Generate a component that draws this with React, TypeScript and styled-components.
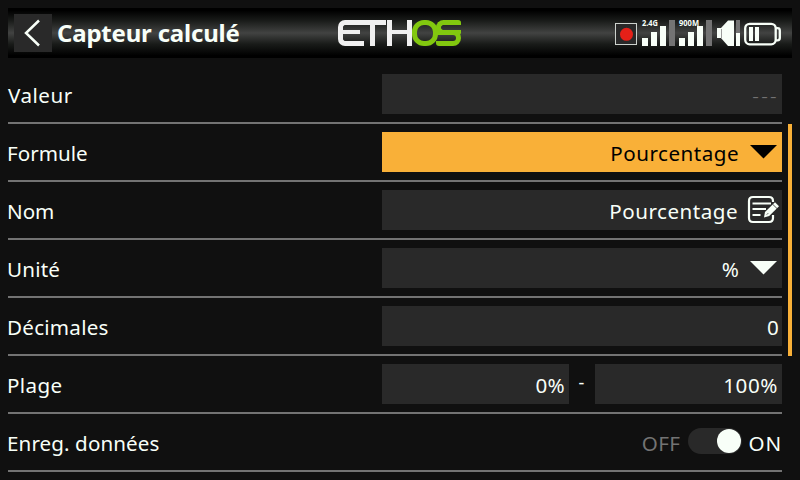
import React from "react";
import styled, { createGlobalStyle } from "styled-components";

const GlobalStyle = createGlobalStyle`
  body { margin: 0; background: #101010; overflow: hidden; }
  *, *::before, *::after { box-sizing: border-box; }
`;

const Screen = styled.div`
  width: 800px;
  height: 480px;
  padding: 8px 8px 0;
  display: flex;
  flex-direction: column;
  overflow: hidden;
  background: #101010;
  color: #f8fff8;
  font: 20.6px "Noto Sans", sans-serif;
`;

const Header = styled.header`
  height: 50px;
  flex: none;
  padding: 0 11px 0 6px;
  display: flex;
  align-items: center;
  background: linear-gradient(#000 0%, #000 5%, #191b19 25%, #424342 50%, #191b19 72%, #000 95%, #000 100%);
`;

const BackButton = styled.button`
  width: 38px;
  height: 38px;
  padding: 0;
  border: 0;
  background: #292929;
  svg { display: block; }
`;

const Title = styled.h1`
  width: 281px;
  margin: 0 0 0 5px;
  font-size: 24px;
  line-height: 50px;
  font-weight: 700;
  white-space: nowrap;
  letter-spacing: -0.2px;
`;

const Logo = styled.div`
  display: flex;
  align-items: flex-start;
  width: 124px;
  height: 26px;
`;

const LogoE = styled.span`
  width: 26px;
  height: 26px;
  border: solid #f0f0f0;
  border-width: 5px 0 5px 5px;
  border-radius: 7px 0 0 7px;
  padding-top: 5px;
  &::before { content: ""; display: block; width: 17px; height: 4px; background: #f0f0f0; }
`;

const LogoT = styled.span`
  width: 22px;
  height: 26px;
  margin-right: 1px;
  border-top: 5px solid #f0f0f0;
  padding-left: 6px;
  &::before { content: ""; display: block; width: 5px; height: 21px; background: #f0f0f0; }
`;

const LogoH = styled.span`
  width: 25px;
  height: 26px;
  border: solid #f0f0f0;
  border-width: 0 5px;
  padding-top: 10px;
  &::before { content: ""; display: block; height: 4px; background: #f0f0f0; }
`;

const LogoO = styled.span`
  width: 26px;
  height: 26px;
  border: 5px solid #82c80f;
  border-radius: 12px;
`;

const LogoS = styled.span`
  width: 25px;
  height: 26px;
  margin-left: -2px;
  &::before, &::after { content: ""; display: block; width: 25px; border: 5px solid #82c80f; }
  &::before { height: 15px; border-right: 0; border-radius: 8px 3px 3px 8px; }
  &::after { height: 16px; margin-top: -5px; border-left: 0; border-radius: 3px 8px 8px 3px; }
`;

const Status = styled.div`
  margin-left: auto;
  svg { display: block; }
`;

const Body = styled.main`
  display: flex;
  justify-content: space-between;
  padding-top: 8px;
`;

const List = styled.div`
  width: 774px;
`;

const Row = styled.div`
  height: 58px;
  padding-top: 8px;
  display: flex;
  justify-content: space-between;
  align-items: flex-start;
  border-bottom: 2px solid #737373;
`;

const Label = styled.span<{ $spacing?: number; $shift?: number }>`
  line-height: 40px;
  padding-top: 1px;
  margin-left: ${(p) => p.$shift ?? -1}px;
  white-space: nowrap;
  letter-spacing: ${(p) => p.$spacing ?? 0.2}px;
`;

const Controls = styled.div`
  width: 400px;
  height: 40px;
  display: flex;
  justify-content: flex-end;
`;

const Field = styled.div<{ $width?: number; $active?: boolean; $muted?: boolean; $right?: number }>`
  width: ${(p) => p.$width ?? 400}px;
  height: 40px;
  display: flex;
  justify-content: flex-end;
  align-items: flex-start;
  padding-right: ${(p) => p.$right ?? 4}px;
  background: ${(p) => (p.$active ? "#f9b038" : "#292929")};
  color: ${(p) => (p.$active ? "#000" : p.$muted ? "#737373" : "#f8fff8")};
  svg { display: block; flex: none; }
`;

const Value = styled.span<{ $spacing?: number; $muted?: boolean; $gap?: number }>`
  line-height: 40px;
  padding-top: 1px;
  margin-right: ${(p) => p.$gap ?? 0}px;
  letter-spacing: ${(p) => p.$spacing ?? 0.1}px;
  color: ${(p) => (p.$muted ? "#737373" : "inherit")};
`;

const Dashes = styled(Value)`
  margin-right: -1px;
  font-weight: 300;
  letter-spacing: 2.3px;
`;

const Dash = styled.span`
  width: 25px;
  margin-right: 1px;
  line-height: 36px;
  font-size: 18px;
  text-align: center;
`;

const Toggle = styled.span`
  width: 54px;
  height: 26px;
  margin: 6px 6px 0 8px;
  padding: 1px;
  display: flex;
  justify-content: flex-end;
  border-radius: 13px;
  background: #292929;
  &::after { content: ""; width: 24px; height: 24px; border-radius: 50%; background: #f8fff8; }
`;

const Scrollbar = styled.div`
  width: 4px;
  height: 232px;
  margin-top: 58px;
  background: #f9b038;
`;

const Caret = () => (
  <svg width="43" height="40" fill="currentColor">
    <path d="M11 13H38L24.5 26.5Z" />
  </svg>
);

const EditIcon = () => (
  <svg width="36" height="40" fill="none" stroke="currentColor" strokeWidth="2.2">
    <path d="M27 12V11Q27 7 23 7H7Q3 7 3 11V28Q3 32 7 32H23Q27 32 27 28V25" />
    <path d="M6.5 13.5H25M6.5 19H20M6.5 25H14.5" />
    <path d="M19 22L29 12.3L33 16.3L23.2 26L18 27.5Z" fill="currentColor" stroke="none" />
    <path d="M20.8 24.6L22.2 23.2M26.6 14.2L31.3 18.8" stroke="#292929" strokeWidth="0.8" />
  </svg>
);

const Bars = ({ x, name, width }: { x: number; name: string; width: number }) => (
  <g fill="#f8fff8">
    <rect x={x} y="18" width="6" height="8" />
    <rect x={x + 9} y="12" width="6" height="14" />
    <rect x={x + 18} y="6" width="6" height="20" />
    <rect x={x + 27} y="0" width="6" height="26" fill="#737373" />
    <text x={x} y="6.3" fontSize="8" fontWeight="700" textLength={width} lengthAdjust="spacingAndGlyphs">{name}</text>
  </g>
);

const StatusIcons = () => (
  <svg width="166" height="38" viewBox="0 -6 166 38">
    <rect x="0.5" y="3.5" width="21" height="21" fill="#292929" stroke="#cdd2cd" />
    <circle cx="11.5" cy="14.3" r="6.5" fill="#e52018" />
    <Bars x={27} name="2.4G" width={16} />
    <Bars x={64} name="900M" width={20} />
    <path d="M102 8H106L113 0.5H119V26H113L106 18H102Z" fill="#f8fff8" />
    <path d="M106.5 9V18" stroke="#737373" strokeWidth="0.7" />
    <rect x="121" y="0" width="4" height="26" fill="#737373" />
    <rect x="121" y="13" width="4" height="13" fill="#f8fff8" />
    <g fill="none" stroke="#f8fff8" strokeWidth="2.3">
      <rect x="130.2" y="3.8" width="30.5" height="20.5" rx="4.5" />
      <path d="M161 8.2H162.5Q164.8 8.2 164.8 10.5V18Q164.8 20.3 162.5 20.3H161" />
    </g>
    <path d="M134 7H138V21H134ZM140 7H144V21H140Z" fill="#f8fff8" />
  </svg>
);

export default function App() {
  return (
    <>
      <GlobalStyle />
      <Screen>
        <Header>
          <BackButton aria-label="Retour">
            <svg width="38" height="38" fill="none" stroke="#f8fff8" strokeWidth="2.5">
              <path d="M25 6.5L12 19L25 31.5" />
            </svg>
          </BackButton>
          <Title>Capteur calculé</Title>
          <Logo role="img" aria-label="ETHOS">
            <LogoE /><LogoT /><LogoH /><LogoO /><LogoS />
          </Logo>
          <Status><StatusIcons /></Status>
        </Header>
        <Body>
          <List>
            <Row>
              <Label $spacing={0.5} $shift={0}>Valeur</Label>
              <Field $muted><Dashes>---</Dashes></Field>
            </Row>
            <Row>
              <Label $spacing={0}>Formule</Label>
              <Field $active $right={0}><Value $spacing={0.5}>Pourcentage</Value><Caret /></Field>
            </Row>
            <Row>
              <Label $spacing={0}>Nom</Label>
              <Field $right={0}><Value $spacing={0.5} $gap={8}>Pourcentage</Value><EditIcon /></Field>
            </Row>
            <Row>
              <Label>Unité</Label>
              <Field $right={0}><Value>%</Value><Caret /></Field>
            </Row>
            <Row>
              <Label $spacing={0.25}>Décimales</Label>
              <Field $right={3}><Value>0</Value></Field>
            </Row>
            <Row>
              <Label $spacing={0.4}>Plage</Label>
              <Controls>
                <Field $width={187}><Value $spacing={0.3}>0%</Value></Field>
                <Dash>-</Dash>
                <Field $width={187}><Value $spacing={0.6}>100%</Value></Field>
              </Controls>
            </Row>
            <Row>
              <Label $spacing={0.1}>Enreg. données</Label>
              <Controls>
                <Value $muted $spacing={0.4}>OFF</Value>
                <Toggle />
                <Value $spacing={0.9}>ON</Value>
              </Controls>
            </Row>
          </List>
          <Scrollbar />
        </Body>
      </Screen>
    </>
  );
}
